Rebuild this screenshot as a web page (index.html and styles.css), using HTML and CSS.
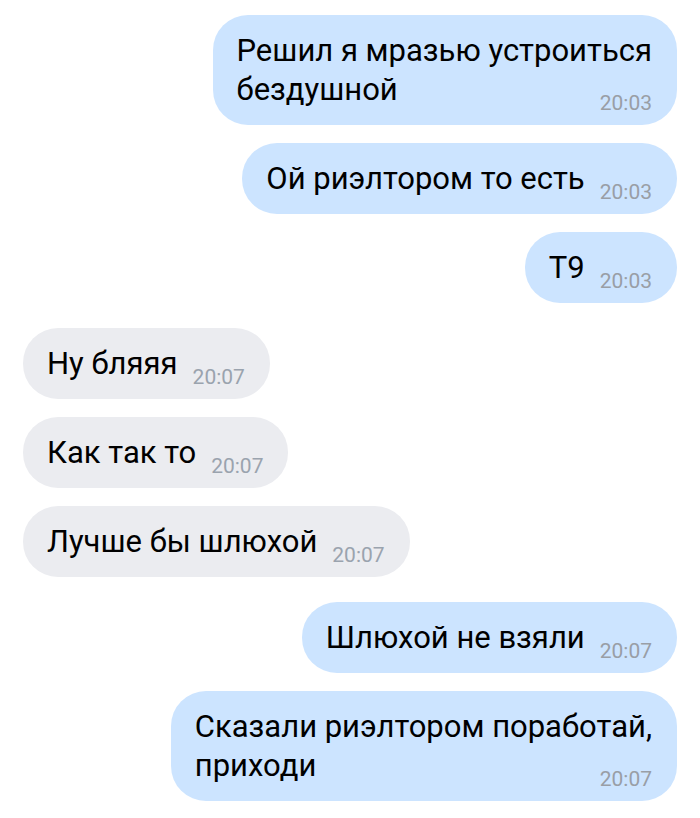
FILE: index.html
```html
<!DOCTYPE html>
<html lang="ru">
<head>
    <meta charset="UTF-8">
    <meta name="viewport" content="width=device-width, initial-scale=1.0">
    <title>Чат</title>
    <link rel="stylesheet" href="styles.css">
</head>
<body>

    <div class="chat">
        <div class="msg out">
            <div class="bubble">Решил я мразью устроиться<br><span class="time">20:03</span>бездушной</div>
        </div>
        <div class="msg out">
            <div class="bubble"><span class="time">20:03</span>Ой риэлтором то есть</div>
        </div>
        <div class="msg out">
            <div class="bubble"><span class="time">20:03</span>Т9</div>
        </div>

        <div class="msg in switch">
            <div class="bubble"><span class="time">20:07</span>Ну бляяя</div>
        </div>
        <div class="msg in">
            <div class="bubble"><span class="time">20:07</span>Как так то</div>
        </div>
        <div class="msg in">
            <div class="bubble"><span class="time">20:07</span>Лучше бы шлюхой</div>
        </div>

        <div class="msg out switch">
            <div class="bubble"><span class="time">20:07</span>Шлюхой не взяли</div>
        </div>
        <div class="msg out">
            <div class="bubble">Сказали риэлтором поработай,<br><span class="time">20:07</span>приходи</div>
        </div>
    </div>

</body>
</html>
```

FILE: styles.css
```css
/* Allgemeine Stile */
body {
    font-family: Roboto, "Noto Sans", sans-serif;
    background-color: #fff;
    margin: 0;
}

.chat {
    display: flex;
    flex-direction: column;
    gap: 18px;
    padding: 15px 23px;
}

.msg {
    display: flex;
}

.msg.out {
    justify-content: flex-end;
}

.msg.in {
    justify-content: flex-start;
}

.msg.switch {
    margin-top: 7px;
}

.bubble {
    padding: 16px 25px 16px 24px;
    border-radius: 35px;
    font-size: 31px;
    line-height: 39px;
    color: #000;
    white-space: nowrap;
}

.out .bubble {
    background-color: #cce4ff;
}

.in .bubble {
    background-color: #ebecf0;
}

.time {
    float: right;
    margin-left: 15px;
    margin-top: 28px;
    font-size: 21px;
    line-height: 10px;
    color: #999ea6;
}

.in .time {
    color: #9aa3ae;
}
```
